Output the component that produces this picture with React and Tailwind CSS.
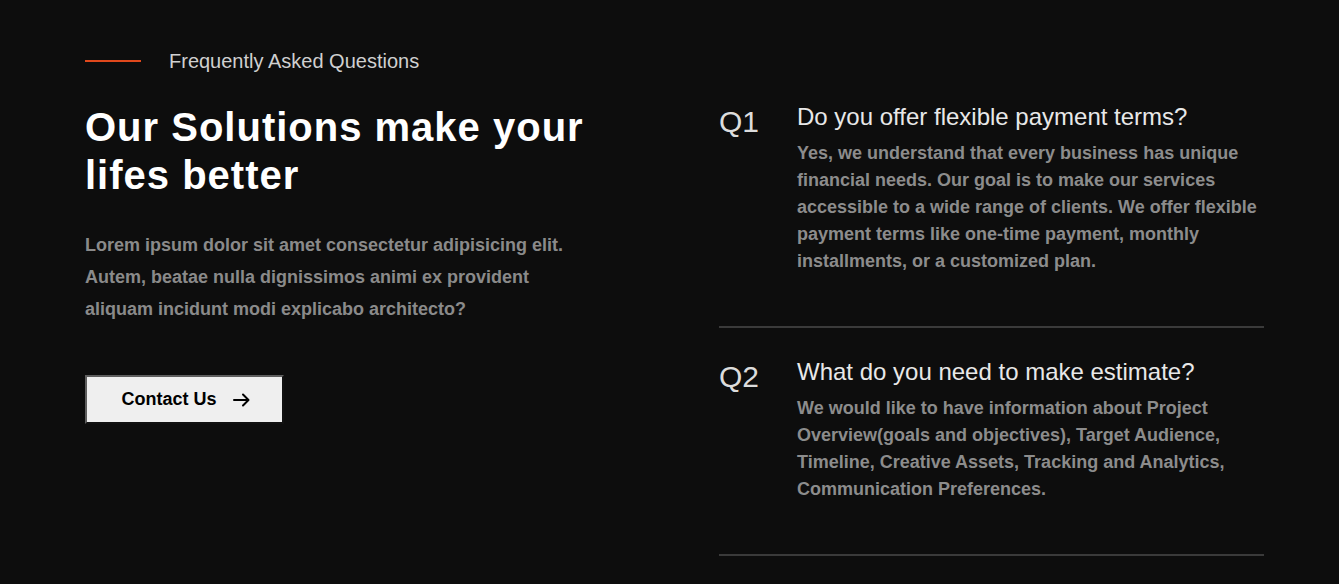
import React from "react";

const faqs = [
  {
    q: "Q1",
    title: "Do you offer flexible payment terms?",
    body: "Yes, we understand that every business has unique financial needs. Our goal is to make our services accessible to a wide range of clients. We offer flexible payment terms like one-time payment, monthly installments, or a customized plan.",
  },
  {
    q: "Q2",
    title: "What do you need to make estimate?",
    body: "We would like to have information about Project Overview(goals and objectives), Target Audience, Timeline, Creative Assets, Tracking and Analytics, Communication Preferences.",
  },
];

function Arrow() {
  return (
    <svg width="17" height="14" viewBox="0 0 17 14" fill="none" stroke="currentColor" strokeWidth="2" strokeLinecap="round" strokeLinejoin="round">
      <path d="M1 7h14" />
      <path d="M10 1.5l5.5 5.5L10 12.5" />
    </svg>
  );
}

export default function App() {
  return (
    <div
      className="min-h-[584px] w-full bg-[#0d0d0d] overflow-hidden"
      style={{ fontFamily: '"Liberation Sans", Arial, sans-serif' }}
    >
      <div className="flex pl-[85px] pr-[75px] pt-[47px]">
        <div className="w-[560px] shrink-0">
          <div className="flex items-center gap-[28px]">
            <span className="block h-[2px] w-[56px] bg-[#e0481c]" />
            <span className="text-[20px] leading-[28px] text-[#d0d0d0]">
              Frequently Asked Questions
            </span>
          </div>
          <h2 className="mt-[28px] w-[520px] text-[40px] leading-[48px] font-bold tracking-[1px] text-white">
            Our Solutions make your lifes better
          </h2>
          <p className="mt-[30px] w-[500px] text-[18px] leading-[32px] font-bold text-[#8a8a8a]">
            Lorem ipsum dolor sit amet consectetur adipisicing elit. Autem,
            beatae nulla dignissimos animi ex provident aliquam incidunt modi
            explicabo architecto?
          </p>
          <button className="mt-[50px] flex h-[49px] w-[199px] items-center justify-center gap-[16px] border-2 border-t-[#5e5e5e] border-l-[#5e5e5e] border-r-[#111] border-b-[#111] bg-[#efefef] pl-[2px] text-[18px] font-bold text-black">
            Contact Us
            <Arrow />
          </button>
        </div>
        <div className="ml-[74px] flex-1 pt-[54px]">
          {faqs.map((f, i) => (
            <div
              key={f.q}
              className={`flex border-b-2 border-[#3a3a3a] pb-[51px] ${
                i > 0 ? "pt-[28px]" : ""
              }`}
            >
              <div className="w-[78px] shrink-0 text-[30px] leading-[42px] text-[#dcdcdc]">
                {f.q}
              </div>
              <div className="flex-1">
                <h3 className="text-[24px] leading-[32px] text-[#e8e8e8]">
                  {f.title}
                </h3>
                <p className="mt-[7px] text-[18px] leading-[27px] font-bold text-[#8c8c8c]">
                  {f.body}
                </p>
              </div>
            </div>
          ))}
        </div>
      </div>
    </div>
  );
}
